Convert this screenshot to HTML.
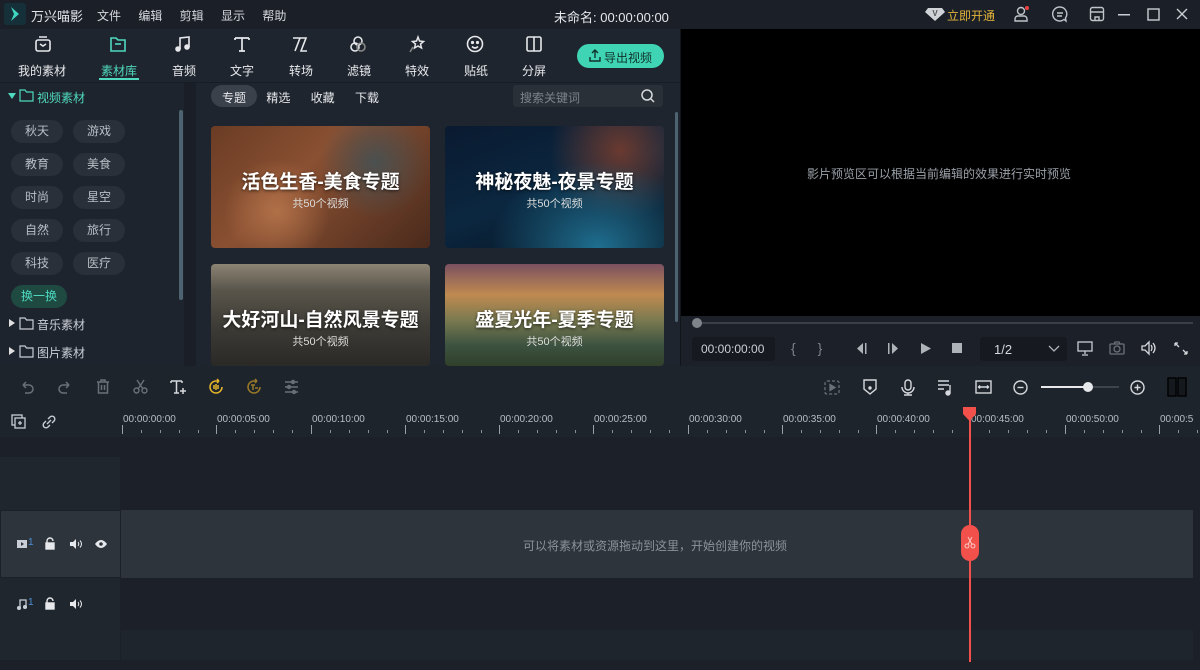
<!DOCTYPE html>
<html><head><meta charset="utf-8"><style>
*{margin:0;padding:0;box-sizing:border-box}
body{width:1200px;height:670px;overflow:hidden;background:#1e242c;font-family:"Liberation Sans","Noto Sans CJK SC",sans-serif;color:#c9ced6;position:relative;font-size:12px}
.a{position:absolute}
.t{white-space:nowrap}
svg{position:absolute;overflow:visible}
.tag{position:absolute;width:52px;height:23px;border-radius:12px;background:#2a3039;color:#b9bec6;font-size:12px;text-align:center;line-height:23px}
.card{position:absolute;width:219px;border-radius:4px;overflow:hidden}
.card .h{position:absolute;left:0;right:0;text-align:center;color:#fff;font-size:19px;font-weight:bold;text-shadow:0 1px 3px rgba(0,0,0,.7)}
.card .s{position:absolute;left:0;right:0;text-align:center;color:#ddd;font-size:11px}
.nav{position:absolute;top:62px;font-size:12px;color:#e8eaed;width:60px;text-align:center}
.tl{position:absolute;top:414px;font-size:10px;color:#b8bec6}
</style></head><body>
<!-- title bar -->
<div class="a" style="left:0;top:0;width:1200px;height:29px;background:#1b2028"></div>
<div class="a" style="left:4px;top:3px;width:22px;height:22px;background:#16303a;border-radius:3px"></div>
<svg style="left:8px;top:6px" width="14" height="16"><path d="M3 1 L11 8 L3 15 L6 8Z" fill="#3fd6c0"/></svg>
<div class="a t" style="left:31px;top:6px;font-size:13px;color:#e4e6ea">万兴喵影</div>
<div class="a t" style="left:97px;top:7px;font-size:12px;color:#d5d8dd;word-spacing:14px">文件 编辑 剪辑 显示 帮助</div>
<div class="a t" style="left:554px;top:7px;font-size:13px;color:#e4e6ea">未命名: 00:00:00:00</div>
<svg style="left:925px;top:6px" width="20" height="16"><path d="M3 2h14l3 4-10 9L0 6z" fill="#cfd2d6"/><text x="10" y="10" font-size="8" text-anchor="middle" fill="#555" font-family="Liberation Sans" font-weight="bold">V</text></svg>
<div class="a t" style="left:947px;top:7px;font-size:12px;color:#e2b23a">立即开通</div>
<svg style="left:1014px;top:6px" width="16" height="16" fill="none" stroke="#bfc4ca" stroke-width="1.4"><circle cx="7" cy="5" r="3.5"/><path d="M1 15v-2a3 3 0 0 1 3-3h6a3 3 0 0 1 3 3v2z"/><circle cx="13" cy="2" r="2" fill="#f04040" stroke="none"/></svg>
<svg style="left:1052px;top:6px" width="16" height="16" fill="none" stroke="#bfc4ca" stroke-width="1.4"><path d="M8 1a7 7 0 1 0 4 12.5l2 1.5-.5-3A7 7 0 0 0 8 1z"/><path d="M5 7h6M5 10h5"/></svg>
<svg style="left:1089px;top:6px" width="16" height="16" fill="none" stroke="#bfc4ca" stroke-width="1.4"><rect x="1.5" y="1.5" width="13" height="13" rx="2"/><path d="M1.5 6h13M6 14v-3h4v3"/></svg>
<svg style="left:1118px;top:14px" width="12" height="2"><rect width="12" height="1.5" fill="#c9cdd3"/></svg>
<svg style="left:1147px;top:8px" width="13" height="13" fill="none" stroke="#c9cdd3" stroke-width="1.4"><rect x="1" y="1" width="11" height="11"/></svg>
<svg style="left:1176px;top:8px" width="12" height="12" stroke="#c9cdd3" stroke-width="1.4"><path d="M1 1l10 10M11 1L1 11"/></svg>

<!-- left media panel -->
<div class="a" style="left:0;top:29px;width:680px;height:337px;background:#1f252e"></div>
<!-- nav icons -->
<svg style="left:34px;top:35px" width="18" height="18" fill="none" stroke="#e6e8eb" stroke-width="1.6"><rect x="2" y="5" width="14" height="11" rx="2"/><path d="M5 2h8M6 9l3 2 3-2"/></svg>
<svg style="left:109px;top:35px" width="18" height="18" fill="none" stroke="#4fd9bf" stroke-width="1.6"><path d="M2 3h5l2 2h7v11H2z"/><path d="M6 9h6"/></svg>
<svg style="left:174px;top:35px" width="18" height="18" fill="none" stroke="#e6e8eb" stroke-width="1.6"><path d="M6 14V3l9-1v10"/><circle cx="4" cy="14" r="2" fill="#e6e8eb"/><circle cx="13" cy="12" r="2" fill="#e6e8eb"/></svg>
<svg style="left:233px;top:35px" width="18" height="18" fill="none" stroke="#e6e8eb" stroke-width="1.7"><path d="M2 3h14M9 3v13M2 3v2M16 3v2M6 16h6"/></svg>
<svg style="left:291px;top:35px" width="18" height="18" fill="none" stroke="#e6e8eb" stroke-width="1.6"><path d="M2 3h7L4 16M9 3h6l-5 13h6"/></svg>
<svg style="left:349px;top:35px" width="18" height="18" fill="none" stroke="#e6e8eb" stroke-width="1.6"><circle cx="9" cy="6" r="4"/><circle cx="6" cy="12" r="4"/><circle cx="12" cy="12" r="4" stroke="#888"/></svg>
<svg style="left:408px;top:35px" width="18" height="18" fill="none" stroke="#e6e8eb" stroke-width="1.5"><path d="M10 2l1.5 4 4 .5-3 2.5 1 4-3.5-2-3.5 2 1-4-3-2.5 4-.5z"/><path d="M5 12l-3 5" stroke="#888"/></svg>
<svg style="left:466px;top:35px" width="18" height="18" fill="none" stroke="#e6e8eb" stroke-width="1.6"><circle cx="9" cy="9" r="7.5"/><circle cx="6.5" cy="7.5" r=".8" fill="#e6e8eb"/><circle cx="11.5" cy="7.5" r=".8" fill="#e6e8eb"/><path d="M6 11.5q3 3 6 0"/></svg>
<svg style="left:525px;top:35px" width="18" height="18" fill="none" stroke="#e6e8eb" stroke-width="1.6"><rect x="2" y="2" width="14" height="14" rx="1.5"/><path d="M9 2v14"/></svg>
<div class="nav" style="left:12px">我的素材</div>
<div class="nav" style="left:89px;color:#4fd9bf">素材库</div>
<div class="a" style="left:99px;top:78px;width:40px;height:2px;background:#4fd9bf"></div>
<div class="nav" style="left:154px">音频</div>
<div class="nav" style="left:212px">文字</div>
<div class="nav" style="left:271px">转场</div>
<div class="nav" style="left:329px">滤镜</div>
<div class="nav" style="left:387px">特效</div>
<div class="nav" style="left:446px">贴纸</div>
<div class="nav" style="left:504px">分屏</div>
<div class="a" style="left:577px;top:44px;width:87px;height:24px;border-radius:12px;background:#3fd5b4"></div>
<svg style="left:589px;top:49px" width="12" height="13" fill="none" stroke="#10302a" stroke-width="1.4"><path d="M6 9V1M3 4l3-3 3 3M1 8v4h10V8"/></svg>
<div class="a t" style="left:604px;top:49px;font-size:12px;color:#10302a">导出视频</div>
<div class="a" style="left:0;top:82px;width:680px;height:1px;background:#181d24"></div>
<!-- sidebar -->
<div class="a" style="left:0;top:83px;width:184px;height:283px;background:#1e242d"></div>
<div class="a" style="left:184px;top:83px;width:12px;height:283px;background:#1a1f27"></div>
<div class="a" style="left:179px;top:110px;width:4px;height:190px;background:#4e6370;border-radius:2px"></div>
<svg style="left:8px;top:92px" width="8" height="8"><path d="M0 1h8L4 7z" fill="#4fd9bf"/></svg>
<svg style="left:19px;top:89px" width="15" height="13" fill="none" stroke="#4fd9bf" stroke-width="1.2"><path d="M1 1h5l1.5 2H14v9H1z"/></svg>
<div class="a t" style="left:37px;top:89px;font-size:12px;color:#4fd9bf">视频素材</div>
<div class="tag" style="left:11px;top:120px">秋天</div><div class="tag" style="left:73px;top:120px">游戏</div>
<div class="tag" style="left:11px;top:153px">教育</div><div class="tag" style="left:73px;top:153px">美食</div>
<div class="tag" style="left:11px;top:186px">时尚</div><div class="tag" style="left:73px;top:186px">星空</div>
<div class="tag" style="left:11px;top:219px">自然</div><div class="tag" style="left:73px;top:219px">旅行</div>
<div class="tag" style="left:11px;top:252px">科技</div><div class="tag" style="left:73px;top:252px">医疗</div>
<div class="tag" style="left:11px;top:285px;width:56px;background:#1e4a42;color:#4fd9bf">换一换</div>
<svg style="left:9px;top:319px" width="7" height="8"><path d="M0 0v8l6-4z" fill="#e0e0e0"/></svg>
<svg style="left:19px;top:317px" width="15" height="13" fill="none" stroke="#c9ced6" stroke-width="1.2"><path d="M1 1h5l1.5 2H14v9H1z"/></svg>
<div class="a t" style="left:37px;top:316px;font-size:12px;color:#c9ced6">音乐素材</div>
<svg style="left:9px;top:347px" width="7" height="8"><path d="M0 0v8l6-4z" fill="#e0e0e0"/></svg>
<svg style="left:19px;top:345px" width="15" height="13" fill="none" stroke="#c9ced6" stroke-width="1.2"><path d="M1 1h5l1.5 2H14v9H1z"/></svg>
<div class="a t" style="left:37px;top:344px;font-size:12px;color:#c9ced6">图片素材</div>
<!-- sub tabs -->
<div class="a" style="left:211px;top:85px;width:46px;height:22px;border-radius:11px;background:#3a414b"></div>
<div class="a t" style="left:222px;top:89px;font-size:12px;color:#e6e8eb;word-spacing:17px">专题 精选 收藏 下载</div>
<div class="a" style="left:513px;top:85px;width:150px;height:22px;border-radius:3px;background:#2a3038"></div>
<div class="a t" style="left:520px;top:89px;font-size:12px;color:#7d838b">搜索关键词</div>
<svg style="left:641px;top:89px" width="14" height="14" fill="none" stroke="#d5d8dc" stroke-width="1.5"><circle cx="6" cy="6" r="5"/><path d="M10 10l3 3"/></svg>
<div class="a" style="left:675px;top:112px;width:3px;height:210px;background:#4e6370;border-radius:2px"></div>
<!-- cards -->
<div class="card" style="left:211px;top:126px;height:122px;background:radial-gradient(circle at 30% 70%,#b07048 0,transparent 30%),radial-gradient(circle at 75% 30%,#4a5050 0,transparent 30%),linear-gradient(135deg,#6a3c24,#8a5032 40%,#4a2a1c)">
<div class="h" style="top:41px">活色生香-美食专题</div><div class="s" style="top:69px">共50个视频</div></div>
<div class="card" style="left:445px;top:126px;height:122px;background:radial-gradient(ellipse at 70% 100%,#1f6f90 0,transparent 50%),radial-gradient(circle at 80% 20%,#6a3a30 0,transparent 35%),linear-gradient(160deg,#0a1a30,#0b2740 50%,#07121f)">
<div class="h" style="top:41px">神秘夜魅-夜景专题</div><div class="s" style="top:69px">共50个视频</div></div>
<div class="card" style="left:211px;top:264px;height:102px;background:linear-gradient(180deg,#8c8474 0,#5a564c 25%,#3e3c36 60%,#2a2926)">
<div class="h" style="top:41px">大好河山-自然风景专题</div><div class="s" style="top:69px">共50个视频</div></div>
<div class="card" style="left:445px;top:264px;height:102px;background:linear-gradient(180deg,#7a5060 0,#c08a50 30%,#7a7a50 55%,#3c5240 80%,#30402a)">
<div class="h" style="top:41px">盛夏光年-夏季专题</div><div class="s" style="top:69px">共50个视频</div></div>

<!-- preview -->
<div class="a" style="left:680px;top:29px;width:1px;height:337px;background:#11151a"></div>
<div class="a" style="left:681px;top:29px;width:519px;height:287px;background:#000"></div>
<div class="a t" style="left:807px;top:165px;font-size:12px;color:#9aa0a8">影片预览区可以根据当前编辑的效果进行实时预览</div>
<div class="a" style="left:681px;top:316px;width:519px;height:50px;background:#1c2129"></div>
<div class="a" style="left:697px;top:322px;width:496px;height:2px;background:#3a4048"></div>
<div class="a" style="left:692px;top:318px;width:10px;height:10px;border-radius:5px;background:#7f848a"></div>
<div class="a" style="left:692px;top:337px;width:83px;height:24px;border-radius:3px;background:#161a20"></div>
<div class="a t" style="left:701px;top:342px;font-size:12px;color:#c9ced6">00:00:00:00</div>
<div class="a t" style="left:791px;top:340px;font-size:14px;color:#7d838b;word-spacing:18px">{ }</div>
<svg style="left:855px;top:343px" width="12" height="11" fill="#aeb3b9"><path d="M8 0v11L2 5.5z"/><rect x="10" y="0" width="1.5" height="11"/></svg>
<svg style="left:888px;top:343px" width="12" height="11" fill="#aeb3b9"><rect x="0" y="0" width="1.5" height="11"/><path d="M4 0v11l6-5.5z"/></svg>
<svg style="left:921px;top:343px" width="10" height="11" fill="#aeb3b9"><path d="M0 0v11l10-5.5z"/></svg>
<svg style="left:952px;top:343px" width="10" height="10" fill="#aeb3b9"><rect width="10" height="10"/></svg>
<div class="a" style="left:980px;top:337px;width:87px;height:24px;border-radius:3px;background:#161a20"></div>
<div class="a t" style="left:994px;top:342px;font-size:13px;color:#d5d8dc">1/2</div>
<svg style="left:1048px;top:345px" width="12" height="7" fill="none" stroke="#aeb3b9" stroke-width="1.3"><path d="M1 1l5 5 5-5"/></svg>
<svg style="left:1077px;top:341px" width="16" height="15" fill="none" stroke="#c9ced6" stroke-width="1.3"><rect x="1" y="1" width="14" height="9"/><path d="M8 10v3M5 14h6"/></svg>
<svg style="left:1109px;top:341px" width="16" height="14" fill="none" stroke="#6c7279" stroke-width="1.3"><rect x="1" y="3" width="14" height="10" rx="1"/><circle cx="8" cy="8" r="3"/><path d="M5 3l1-2h4l1 2"/></svg>
<svg style="left:1141px;top:341px" width="16" height="14" fill="none" stroke="#d5d8dc" stroke-width="1.3"><path d="M1 5h3l4-4v12L4 9H1z"/><path d="M10 4q2 3 0 6M12 2q4 5 0 10"/></svg>
<svg style="left:1174px;top:342px" width="14" height="13" fill="none" stroke="#d5d8dc" stroke-width="1.3"><path d="M1 1l4 4M1 1v3M1 1h3M13 12L9 8M13 12V9M13 12h-3"/></svg>

<!-- timeline toolbar -->
<div class="a" style="left:0;top:366px;width:1200px;height:41px;background:#1e242c"></div>
<svg style="left:20px;top:380px" width="14" height="14" fill="none" stroke="#6a7078" stroke-width="1.5"><path d="M3 5h6a4 4 0 0 1 0 8H5M3 5l3-3M3 5l3 3"/></svg>
<svg style="left:58px;top:380px" width="14" height="14" fill="none" stroke="#6a7078" stroke-width="1.5"><path d="M11 5H5a4 4 0 0 0 0 8h4M11 5L8 2M11 5L8 8"/></svg>
<svg style="left:96px;top:379px" width="14" height="15" fill="none" stroke="#6a7078" stroke-width="1.5"><path d="M1 3h12M5 3V1h4v2M2.5 3v11h9V3M5.5 6v5M8.5 6v5"/></svg>
<svg style="left:133px;top:379px" width="15" height="15" fill="none" stroke="#6a7078" stroke-width="1.4"><circle cx="3.5" cy="11.5" r="2.5"/><circle cx="11.5" cy="11.5" r="2.5"/><path d="M5 10L11 1M10 10L4 1"/></svg>
<svg style="left:170px;top:379px" width="17" height="16" fill="none" stroke="#d5d8dc" stroke-width="1.5"><path d="M1 2h11M6.5 2v12M1 2v2M12 2v2M4 14h5M13 9v6M10 12h6"/></svg>
<svg style="left:208px;top:379px" width="16" height="16" fill="none" stroke="#e5b628" stroke-width="1.5"><path d="M14 8A6 6 0 1 1 8 2h3M11 2l-2-2M11 2L9 4"/><path d="M6 6v4M8 5v6M10 6v4"/></svg>
<svg style="left:246px;top:379px" width="16" height="16" fill="none" stroke="#9a7a28" stroke-width="1.5"><path d="M14 8A6 6 0 1 1 8 2h3M11 2l-2-2M11 2L9 4"/><path d="M5 6h4M7 6v5M9 9h3"/></svg>
<svg style="left:284px;top:380px" width="15" height="14" fill="none" stroke="#6a7078" stroke-width="1.4"><path d="M1 2h13M1 7h13M1 12h13"/><circle cx="9" cy="2" r="1.5"/><circle cx="5" cy="7" r="1.5"/><circle cx="10" cy="12" r="1.5"/></svg>
<svg style="left:824px;top:380px" width="16" height="15" fill="none" stroke="#6a7078" stroke-width="1.3" stroke-dasharray="3 2"><rect x="1" y="1" width="14" height="13" rx="2"/><path d="M6 4.5v6l5-3z" fill="#6a7078" stroke-dasharray="0"/></svg>
<svg style="left:863px;top:379px" width="14" height="16" fill="none" stroke="#d5d8dc" stroke-width="1.4"><path d="M1 1h12v9l-6 5-6-5z"/><circle cx="7" cy="9" r="1" fill="#d5d8dc"/></svg>
<svg style="left:901px;top:379px" width="14" height="17" fill="none" stroke="#d5d8dc" stroke-width="1.4"><rect x="4" y="1" width="6" height="10" rx="3"/><path d="M1 8a6 6 0 0 0 12 0M7 14v2M3 16h8"/></svg>
<svg style="left:937px;top:379px" width="16" height="16" fill="none" stroke="#d5d8dc" stroke-width="1.4"><path d="M1 2h11M1 6h11M1 10h6M13 6v8"/><circle cx="11" cy="14" r="2" fill="#d5d8dc"/></svg>
<svg style="left:975px;top:380px" width="17" height="14" fill="none" stroke="#d5d8dc" stroke-width="1.4"><rect x="1" y="1" width="15" height="12"/><path d="M4 7h9M5 5.5L3.5 7 5 8.5M12 5.5L13.5 7 12 8.5"/></svg>
<svg style="left:1013px;top:380px" width="15" height="15" fill="none" stroke="#d5d8dc" stroke-width="1.4"><circle cx="7.5" cy="7.5" r="6.5"/><path d="M4.5 7.5h6"/></svg>
<div class="a" style="left:1041px;top:386px;width:48px;height:2px;background:#e6e8eb"></div>
<div class="a" style="left:1089px;top:386px;width:30px;height:2px;background:#3e444c"></div>
<div class="a" style="left:1083px;top:382px;width:10px;height:10px;border-radius:5px;background:#e6e8eb"></div>
<svg style="left:1130px;top:380px" width="15" height="15" fill="none" stroke="#d5d8dc" stroke-width="1.4"><circle cx="7.5" cy="7.5" r="6.5"/><path d="M4.5 7.5h6M7.5 4.5v6"/></svg>
<svg style="left:1167px;top:377px" width="20" height="20" fill="none" stroke="#000" stroke-width="1.4"><rect x="1" y="1" width="8" height="18" fill="#15191e"/><rect x="11" y="1" width="8" height="18" fill="#15191e"/></svg>

<!-- ruler -->
<div class="a" style="left:0;top:407px;width:1200px;height:30px;background:#1e242c"></div>
<svg style="left:11px;top:414px" width="16" height="16" fill="none" stroke="#c9ced6" stroke-width="1.3"><rect x="1" y="1" width="10" height="10"/><rect x="4" y="4" width="10" height="10" fill="#1e242c"/><path d="M9 7v4M7 9h4"/></svg>
<svg style="left:42px;top:415px" width="14" height="14" fill="none" stroke="#c9ced6" stroke-width="1.4"><path d="M6 4l2-2a2.5 2.5 0 0 1 4 4l-2 2M8 10l-2 2a2.5 2.5 0 0 1-4-4l2-2M5 9l4-4"/></svg>
<div class="tl" style="left:123px">00:00:00:00</div><div class="tl" style="left:217px">00:00:05:00</div><div class="tl" style="left:312px">00:00:10:00</div><div class="tl" style="left:406px">00:00:15:00</div><div class="tl" style="left:500px">00:00:20:00</div><div class="tl" style="left:594px">00:00:25:00</div><div class="tl" style="left:689px">00:00:30:00</div><div class="tl" style="left:783px">00:00:35:00</div><div class="tl" style="left:877px">00:00:40:00</div><div class="tl" style="left:971px">00:00:45:00</div><div class="tl" style="left:1066px">00:00:50:00</div><div class="tl" style="left:1160px">00:00:5</div>
<svg style="left:0;top:425px" width="1200" height="12">
<g stroke="#9aa0a8" stroke-width="1">
<path d="M122.5 0v9M216.5 0v9M311.5 0v9M405.5 0v9M499.5 0v9M593.5 0v9M688.5 0v9M782.5 0v9M876.5 0v9M970.5 0v9M1065.5 0v9M1159.5 0v9"/>
</g>
<g stroke="#8a9098" stroke-width="1">
<path d="M141.5 5v3M160.5 5v3M179.5 5v3M198.5 5v3M235.5 5v3M254.5 5v3M273.5 5v3M292.5 5v3M330.5 5v3M349.5 5v3M368.5 5v3M387.5 5v3M424.5 5v3M443.5 5v3M462.5 5v3M481.5 5v3M518.5 5v3M537.5 5v3M556.5 5v3M575.5 5v3M612.5 5v3M631.5 5v3M650.5 5v3M669.5 5v3M707.5 5v3M726.5 5v3M745.5 5v3M764.5 5v3M801.5 5v3M820.5 5v3M839.5 5v3M858.5 5v3M895.5 5v3M914.5 5v3M933.5 5v3M952.5 5v3M989.5 5v3M1008.5 5v3M1027.5 5v3M1046.5 5v3M1084.5 5v3M1103.5 5v3M1122.5 5v3M1141.5 5v3M1178.5 5v3M1197.5 5v3"/>
</g></svg>

<!-- tracks -->
<div class="a" style="left:0;top:437px;width:1200px;height:233px;background:#1c2129"></div>
<div class="a" style="left:0;top:437px;width:121px;height:20px;background:#1c2129"></div>
<div class="a" style="left:0;top:457px;width:120px;height:53px;background:#20262e"></div>
<div class="a" style="left:1px;top:511px;width:119px;height:66px;background:#2e343c"></div>
<div class="a" style="left:121px;top:510px;width:1072px;height:68px;background:#2e343c"></div>
<div class="a" style="left:0;top:578px;width:120px;height:52px;background:#20262e"></div>
<div class="a" style="left:0;top:630px;width:120px;height:30px;background:#20262e"></div>
<div class="a" style="left:121px;top:630px;width:1072px;height:30px;background:#1f252d"></div>
<div class="a t" style="left:523px;top:537px;font-size:12px;color:#8c929a">可以将素材或资源拖动到这里，开始创建你的视频</div>
<!-- track icons -->
<svg style="left:17px;top:540px" width="10" height="8"><rect width="10" height="8" fill="#c9ced6"/><path d="M4 2v4l3-2z" fill="#2e343c"/></svg>
<div class="a t" style="left:28px;top:537px;font-size:10px;color:#4a90d9">1</div>
<svg style="left:45px;top:538px" width="10" height="12" fill="none" stroke="#e6e8eb" stroke-width="1.4"><path d="M2 5V3a3 3 0 0 1 6 0"/><rect x="1" y="5" width="8" height="6" fill="#e6e8eb"/></svg>
<svg style="left:70px;top:539px" width="12" height="10"><path d="M0 3h3l3-3v10L3 7H0z" fill="#e6e8eb"/><path d="M8 3q1.5 2 0 4M10 1.5q3 3.5 0 7" stroke="#e6e8eb" fill="none" stroke-width="1"/></svg>
<svg style="left:95px;top:540px" width="12" height="8"><path d="M0 4q6-8 12 0q-6 8-12 0z" fill="#e6e8eb"/><circle cx="6" cy="4" r="1.8" fill="#2e343c"/></svg>
<svg style="left:17px;top:599px" width="10" height="10" fill="none" stroke="#c9ced6" stroke-width="1.3"><path d="M3 9V1h6v7"/><circle cx="2" cy="9" r="1.4" fill="#c9ced6"/><circle cx="8" cy="8" r="1.4" fill="#c9ced6"/></svg>
<div class="a t" style="left:28px;top:597px;font-size:10px;color:#4a90d9">1</div>
<svg style="left:45px;top:598px" width="10" height="12" fill="none" stroke="#e6e8eb" stroke-width="1.4"><path d="M2 5V3a3 3 0 0 1 6 0"/><rect x="1" y="5" width="8" height="6" fill="#e6e8eb"/></svg>
<svg style="left:70px;top:599px" width="12" height="10"><path d="M0 3h3l3-3v10L3 7H0z" fill="#e6e8eb"/><path d="M8 3q1.5 2 0 4M10 1.5q3 3.5 0 7" stroke="#e6e8eb" fill="none" stroke-width="1"/></svg>
<!-- playhead -->
<div class="a" style="left:969px;top:410px;width:1.5px;height:252px;background:#f2504a"></div>
<svg style="left:963px;top:407px" width="13" height="14"><path d="M0 0h13v7l-6.5 7L0 7z" fill="#f2504a"/></svg>
<div class="a" style="left:961px;top:525px;width:18px;height:36px;border-radius:9px;background:#f2504a"></div>
<svg style="left:964px;top:536px" width="12" height="13" fill="none" stroke="#f8c8c4" stroke-width="1"><circle cx="3" cy="10" r="2"/><circle cx="9" cy="10" r="2"/><path d="M4 8.5L8 1M8 8.5L4 1"/></svg>
</body></html>
